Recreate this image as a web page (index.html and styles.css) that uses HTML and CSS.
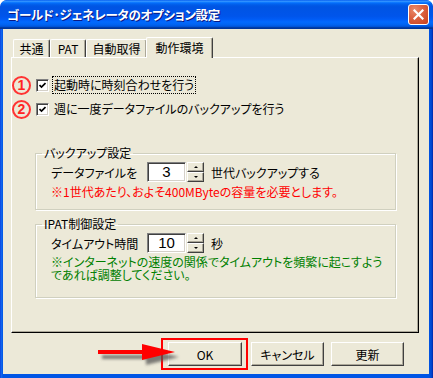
FILE: index.html
```html
<!DOCTYPE html>
<html lang="ja">
<head>
<meta charset="utf-8">
<link rel="stylesheet" href="styles.css">
</head>
<body>
<div class="window">
  <div class="titlebar">
    <span class="title">ゴールド･ジェネレータのオプション設定</span>
    <span class="close"><svg width="11" height="11" viewBox="0 0 11 11"><path d="M1.5 1.5L9.5 9.5M9.5 1.5L1.5 9.5" stroke="#fff" stroke-width="2.2" stroke-linecap="square"/></svg></span>
  </div>
  <div class="client">
    <div class="tabs">
      <div class="tab t1">共通</div>
      <div class="tab t2">PAT</div>
      <div class="tab t3">自動取得</div>
      <div class="tab sel">動作環境</div>
    </div>
    <div class="panel">
      <div class="opt">
        <span class="num">1</span>
        <span class="cb"><svg width="7" height="7" viewBox="0 0 7 7"><path d="M0.5 3L2.5 5L6.5 1" stroke="#000" stroke-width="1.7" fill="none"/></svg></span>
        <span class="lbl focus">起動時に時刻合わせを行う</span>
      </div>
      <div class="opt opt2">
        <span class="num">2</span>
        <span class="cb"><svg width="7" height="7" viewBox="0 0 7 7"><path d="M0.5 3L2.5 5L6.5 1" stroke="#000" stroke-width="1.7" fill="none"/></svg></span>
        <span class="lbl">週に一度データファイルのバックアップを行う</span>
      </div>
      <fieldset class="group g1">
        <legend>バックアップ設定</legend>
        <div class="frow">
          <span class="flbl">データファイルを</span>
          <span class="edit">3</span>
          <span class="spin"><span class="sb"><i class="up"></i></span><span class="sb"><i class="dn"></i></span></span>
          <span class="unit">世代バックアップする</span>
        </div>
        <div class="note red">※1世代あたり、およそ400MByteの容量を必要とします。</div>
      </fieldset>
      <fieldset class="group g2">
        <legend>IPAT制御設定</legend>
        <div class="frow">
          <span class="flbl">タイムアウト時間</span>
          <span class="edit">10</span>
          <span class="spin"><span class="sb"><i class="up"></i></span><span class="sb"><i class="dn"></i></span></span>
          <span class="unit">秒</span>
        </div>
        <div class="note green">※インターネットの速度の関係でタイムアウトを頻繁に起こすよう<br>であれば調整してください。</div>
      </fieldset>
    </div>
    <div class="buttons">
      <svg class="arrow" width="90" height="30" viewBox="0 0 90 30">
        <defs><filter id="sh" x="-20%" y="-50%" width="140%" height="200%"><feGaussianBlur stdDeviation="1.6"/></filter></defs>
        <g transform="translate(3,4)" filter="url(#sh)" fill="#555" opacity="0.75"><rect x="2" y="9" width="48" height="4"/><path d="M46 3L79 11L46 19Z"/></g>
        <rect x="1" y="8" width="48" height="4" fill="#f00"/>
        <path d="M45 2L78 10L45 18Z" fill="#f00"/>
      </svg>
      <span class="okwrap"><span class="btn">OK</span></span>
      <span class="btn">キャンセル</span>
      <span class="btn">更新</span>
    </div>
  </div>
</div>
</body>
</html>
```
FILE: styles.css
```css
html, body { margin: 0; padding: 0; background: #fff; }
body { width: 433px; height: 378px; overflow: hidden; font-family: "Noto Sans CJK JP", sans-serif; font-size: 12px; font-feature-settings: "palt"; color: #000; }
.window { width: 433px; height: 378px; border-radius: 7px 7px 0 0; background: linear-gradient(to right, #0831D9 0, #166AEE 1px, #0055E5 3px, #0055E5 429px, #0042C8 432px, #001EA0 433px); display: flex; flex-direction: column; overflow: hidden; }
.titlebar { height: 29px; flex: none; display: flex; align-items: flex-start; padding-left: 7px; background: linear-gradient(to bottom, #0058EE 0%, #3593FF 4%, #288EFF 6%, #127DFF 8%, #036FFC 10%, #0262EE 14%, #0057E5 20%, #0054E3 24%, #0055EB 56%, #005BF5 66%, #026AFE 76%, #0062EF 86%, #0052D6 92%, #0040AB 94%, #003092 100%); border-radius: 7px 7px 0 0; }
.title { color: #fff; font-weight: bold; font-size: 12.5px; line-height: 14px; margin-top: 8px; text-shadow: 1px 1px 0 #0A1883; letter-spacing: -0.3px; }
.close { margin-left: auto; margin-right: 4px; margin-top: 4px; width: 21px; height: 21px; box-sizing: border-box; border: 1px solid #fff; border-radius: 3px; background: radial-gradient(circle at 30% 25%, #E98B6B 0, #DD6443 40%, #C8401C 100%); display: flex; align-items: center; justify-content: center; }
.client { flex: 1; margin: 0 4px 4px 3px; background: #ECE9D8; display: flex; flex-direction: column; }
.tabs { display: flex; align-items: flex-end; margin: 8px 0 0 10px; height: 20px; position: relative; z-index: 1; }
.tab { box-sizing: border-box; height: 18px; line-height: 17px; text-align: center; border-left: 1px solid #fff; border-top: 1px solid #fff; border-right: 1px solid #404040; box-shadow: inset -1px 0 #ACA899; border-radius: 2px 2px 0 0; }
.t1 { width: 37px; }
.t2 { width: 36px; }
.t3 { width: 61px; }
.sel { width: 67px; height: 21px; line-height: 19px; margin-left: -1px; margin-bottom: -1px; background: #ECE9D8; }
.panel { margin-left: 8px; width: 408px; height: 276px; box-sizing: border-box; border-top: 1px solid #fff; border-left: 1px solid #fff; border-right: 1px solid #000; border-bottom: 1px solid #000; box-shadow: inset -1px -1px #ACA899; padding-top: 18px; }
.opt { display: flex; align-items: center; height: 18px; }
.opt2 { margin-top: 6px; }
.num { box-sizing: border-box; width: 19px; height: 19px; border: 2px solid #F33; border-radius: 50%; color: #F22; font-weight: bold; font-size: 14px; line-height: 15px; text-align: center; font-family: "Liberation Sans", sans-serif; margin-left: 0; }
.cb { box-sizing: border-box; width: 13px; height: 13px; margin-left: 5px; background: #fff; border: 1px solid; border-color: #808080 #fff #fff #808080; box-shadow: inset 1px 1px #404040, inset -1px -1px #D4D0C8; display: flex; align-items: center; justify-content: center; }
.lbl { margin-left: 4px; padding: 0 1px; line-height: 16px; }
.focus { outline: 1px dotted #000; outline-offset: 0; }
.group { margin: 28px 0 0 23px; width: 361px; box-sizing: border-box; border: 1px solid #D0D0BF; box-shadow: 1px 1px #fff, inset 1px 1px #fff; padding: 0 0 0 15px; min-width: 0; }
.group legend { padding: 0 2px; margin-left: -9px; line-height: 14px; }
.g1 { height: 64px; padding-top: 2px; }
.g2 { height: 81px; margin-top: 7px; padding-top: 2px; }
.frow { display: flex; align-items: center; height: 20px; }
.flbl { width: 96px; }
.edit { box-sizing: border-box; width: 39px; height: 20px; background: #fff; border: 1px solid; border-color: #808080 #fff #fff #808080; box-shadow: inset 1px 1px #404040, inset -1px -1px #D4D0C8; text-align: center; font-family: "Liberation Sans", sans-serif; font-size: 15px; line-height: 18px; }
.spin { display: flex; flex-direction: column; margin-left: 1px; width: 17px; height: 20px; }
.sb { flex: 1; box-sizing: border-box; background: #ECE9D8; border: 1px solid; border-color: #fff #404040 #404040 #fff; box-shadow: inset -1px -1px #ACA899; display: flex; align-items: center; justify-content: center; }
.sb i { display: block; width: 0; height: 0; border-left: 2px solid transparent; border-right: 2px solid transparent; }
.sb .up { border-bottom: 2px solid #000; }
.sb .dn { border-top: 2px solid #000; }
.unit { margin-left: 7px; }
.note { margin-top: 3px; line-height: 13px; }
.red { color: #F00; }
.green { color: #008000; line-height: 13px; margin-top: 2px; }
.buttons { position: relative; display: flex; align-items: center; justify-content: flex-end; padding-right: 25px; margin-top: 5px; }
.arrow { position: absolute; left: 94px; top: 4px; }
.okwrap { border: 2px solid #F00; padding: 2px 4px 2px 5px; display: flex; margin-right: 3px; }
.btn { box-sizing: border-box; width: 74px; height: 24px; display: flex; align-items: center; justify-content: center; background: #ECE9D8; border: 1px solid; border-color: #fff #404040 #404040 #fff; box-shadow: inset -1px -1px #ACA899; }
.btn + .btn { margin-left: 7px; }
.buttons > .btn { width: 73px; }
```
